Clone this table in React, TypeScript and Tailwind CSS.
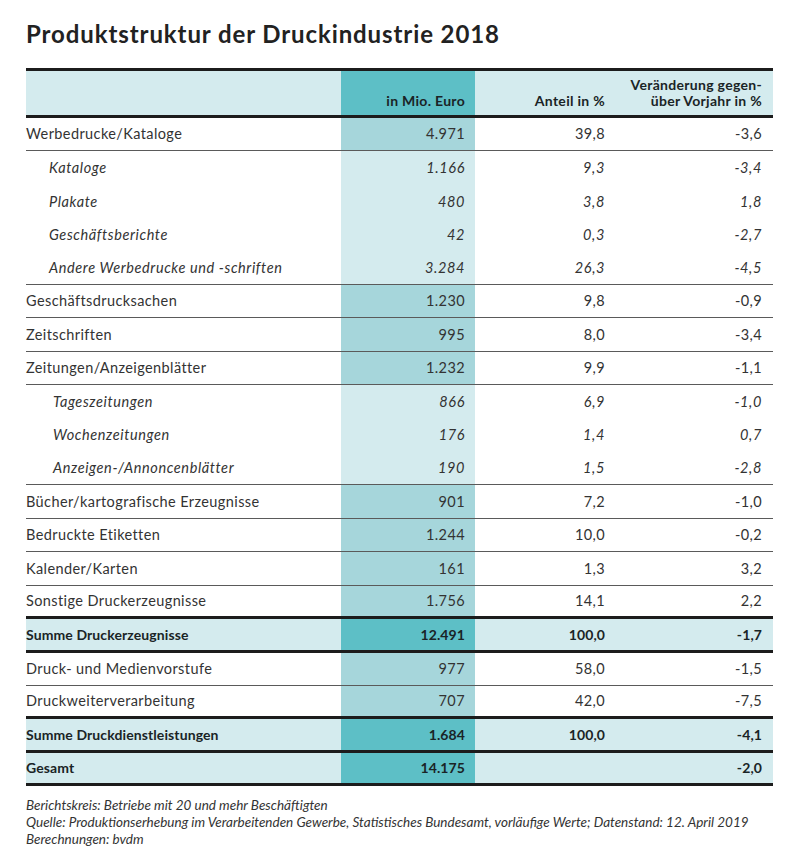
import React from "react";

type Kind = "main" | "sub" | "sum";
type Line = "none" | "thin" | "thick";

interface Row {
  label: string;
  value: string;
  share: string;
  change: string;
  kind: Kind;
  line: Line;
  indent?: "sm" | "lg";
}

const ROWS: Row[] = [
  { label: "Werbedrucke/Kataloge", value: "4.971", share: "39,8", change: "-3,6", kind: "main", line: "thin" },
  { label: "Kataloge", value: "1.166", share: "9,3", change: "-3,4", kind: "sub", line: "none", indent: "sm" },
  { label: "Plakate", value: "480", share: "3,8", change: "1,8", kind: "sub", line: "none", indent: "sm" },
  { label: "Geschäftsberichte", value: "42", share: "0,3", change: "-2,7", kind: "sub", line: "none", indent: "sm" },
  { label: "Andere Werbedrucke und -schriften", value: "3.284", share: "26,3", change: "-4,5", kind: "sub", line: "thin", indent: "sm" },
  { label: "Geschäftsdrucksachen", value: "1.230", share: "9,8", change: "-0,9", kind: "main", line: "thin" },
  { label: "Zeitschriften", value: "995", share: "8,0", change: "-3,4", kind: "main", line: "thin" },
  { label: "Zeitungen/Anzeigenblätter", value: "1.232", share: "9,9", change: "-1,1", kind: "main", line: "thin" },
  { label: "Tageszeitungen", value: "866", share: "6,9", change: "-1,0", kind: "sub", line: "none", indent: "lg" },
  { label: "Wochenzeitungen", value: "176", share: "1,4", change: "0,7", kind: "sub", line: "none", indent: "lg" },
  { label: "Anzeigen-/Annoncenblätter", value: "190", share: "1,5", change: "-2,8", kind: "sub", line: "thin", indent: "lg" },
  { label: "Bücher/kartografische Erzeugnisse", value: "901", share: "7,2", change: "-1,0", kind: "main", line: "thin" },
  { label: "Bedruckte Etiketten", value: "1.244", share: "10,0", change: "-0,2", kind: "main", line: "thin" },
  { label: "Kalender/Karten", value: "161", share: "1,3", change: "3,2", kind: "main", line: "thin" },
  { label: "Sonstige Druckerzeugnisse", value: "1.756", share: "14,1", change: "2,2", kind: "main", line: "thick" },
  { label: "Summe Druckerzeugnisse", value: "12.491", share: "100,0", change: "-1,7", kind: "sum", line: "thick" },
  { label: "Druck- und Medienvorstufe", value: "977", share: "58,0", change: "-1,5", kind: "main", line: "thin" },
  { label: "Druckweiterverarbeitung", value: "707", share: "42,0", change: "-7,5", kind: "main", line: "thick" },
  { label: "Summe Druckdienstleistungen", value: "1.684", share: "100,0", change: "-4,1", kind: "sum", line: "thick" },
  { label: "Gesamt", value: "14.175", share: "", change: "-2,0", kind: "sum", line: "thick" },
];

const LINE_CLASS: Record<Line, string> = {
  none: "",
  thin: "border-b border-[#5a5a5a]",
  thick: "border-b-[3px] border-[#1c1c1c]",
};

const GRID = "grid grid-cols-[315px_134px_140px_158px]";

function TableRow({ row }: { row: Row }) {
  const isSum = row.kind === "sum";
  const isSub = row.kind === "sub";
  const rowBg = isSum ? "bg-[#d4ebee]" : "bg-white";
  const valueBg = isSum ? "bg-[#5dbfc6]" : isSub ? "bg-[#d4ebee]" : "bg-[#a6d6db]";
  const text = isSum
    ? "text-[14px] font-bold tracking-[0.1px] text-[#1a2426]"
    : isSub
      ? "text-[14.5px] italic tracking-[0.6px] text-[#333]"
      : "text-[14.5px] tracking-[0.4px] text-[#333]";
  const indent = row.indent === "lg" ? "pl-[27px]" : row.indent === "sm" ? "pl-[23px]" : "";

  return (
    <div className={`${GRID} h-[33.42px] ${rowBg} ${LINE_CLASS[row.line]} ${text}`}>
      <div className={`flex items-center ${indent}`}>{row.label}</div>
      <div className={`flex items-center justify-end pr-[10px] ${valueBg}`}>{row.value}</div>
      <div className="flex items-center justify-end pr-[10px]">{row.share}</div>
      <div className="flex items-center justify-end pr-[11px]">{row.change}</div>
    </div>
  );
}

export default function App() {
  return (
    <div className="min-h-[864px] bg-white px-[26px] pt-[19px] font-['Lato',sans-serif] text-[#222]">
      <h1 className="text-[24px] font-bold leading-[30px] tracking-[0.9px] text-[#222]">
        Produktstruktur der Druckindustrie 2018
      </h1>

      <div className="mt-[19px] w-[747px]">
        {/* Header */}
        <div
          className={`${GRID} h-[50px] border-y-[3px] border-[#1c1c1c] bg-[#d4ebee] text-[14px] font-bold leading-[16px] tracking-[0.3px] text-[#1a2426]`}
        >
          <div />
          <div className="flex items-end justify-end bg-[#5dbfc6] pb-[6px] pr-[10px]">in Mio. Euro</div>
          <div className="flex items-end justify-end pb-[6px] pr-[10px]">Anteil in %</div>
          <div className="flex flex-col items-end justify-end pb-[6px] pr-[11px] text-right">
            <span>Veränderung gegen-</span>
            <span>über Vorjahr in %</span>
          </div>
        </div>

        {ROWS.map((row) => (
          <TableRow key={row.label} row={row} />
        ))}
      </div>

      <div className="mt-[11px] text-[13.5px] italic leading-[17px] text-[#333]">
        <p>Berichtskreis: Betriebe mit 20 und mehr Beschäftigten</p>
        <p>
          Quelle: Produktionserhebung im Verarbeitenden Gewerbe, Statistisches Bundesamt, vorläufige Werte;
          Datenstand: 12. April 2019
        </p>
        <p>Berechnungen: bvdm</p>
      </div>
    </div>
  );
}
